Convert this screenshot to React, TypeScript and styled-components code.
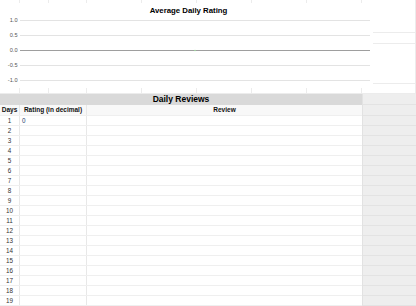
import styled, { createGlobalStyle } from "styled-components";

const GlobalStyle = createGlobalStyle`
  body {
    margin: 0;
    background: #ffffff;
    font-family: "Liberation Sans", Arial, sans-serif;
  }
`;

const SHEET_COLUMNS = [20, 29, 38, 55, 55, 55, 55, 55];
const SHEET_ROWS = [33, 11, 40, 10];
const Y_TICKS = [1.0, 0.5, 0.0, -0.5, -1.0];
const DAYS = Array.from({ length: 19 }, (_, i) => i + 1);

function App(): JSX.Element {
  return (
    <>
      <GlobalStyle />
      <Page>
        <ChartZone>
          <SheetGrid>
            {SHEET_ROWS.map((_, r) =>
              [...SHEET_COLUMNS, 0].map((_, c) => <SheetCell key={`${r}-${c}`} />)
            )}
          </SheetGrid>
          <ChartCard>
            <ChartTitle>Average Daily Rating</ChartTitle>
            <svg width="373" height="71" viewBox="0 0 373 71">
              {Y_TICKS.map((t, i) => {
                const y = 3 + i * 15;
                return (
                  <g key={t}>
                    <line
                      x1="20"
                      x2="370"
                      y1={y + 0.5}
                      y2={y + 0.5}
                      stroke={t === 0 ? "#9e9e9e" : "#e3e3e3"}
                      strokeWidth="1"
                    />
                    <text
                      x="17.5"
                      y={y + 0.5}
                      fontSize="5.6"
                      fill="#555"
                      textAnchor="end"
                      dominantBaseline="middle"
                      fontFamily="Liberation Sans, Arial, sans-serif"
                    >
                      {t.toFixed(1)}
                    </text>
                  </g>
                );
              })}
              <circle cx="195" cy="33.5" r="0.8" fill="#9fdc9f" />
            </svg>
          </ChartCard>
        </ChartZone>
        <TableZone>
          <Table>
            <Band>Daily Reviews</Band>
            <HeaderRow>
              <HeadCell>Days</HeadCell>
              <HeadCell>Rating (in decimal)</HeadCell>
              <HeadCell>Review</HeadCell>
            </HeaderRow>
            {DAYS.map((d) => (
              <Row key={d}>
                <DayCell>{d}</DayCell>
                <RatingCell>{d === 1 ? "0" : ""}</RatingCell>
                <ReviewCell />
              </Row>
            ))}
          </Table>
          <SideColumn>
            <SideCell $h={11} />
            <SideCell $h={11} />
            {DAYS.map((d) => (
              <SideCell key={d} $h={10} />
            ))}
          </SideColumn>
        </TableZone>
      </Page>
    </>
  );
}

export default App;

const Page = styled.div`
  width: 416px;
  height: 306px;
  overflow: hidden;
  display: flex;
  flex-direction: column;
`;

const ChartZone = styled.div`
  position: relative;
  height: 94px;
  flex-shrink: 0;
`;

const SheetGrid = styled.div`
  display: grid;
  grid-template-columns: ${SHEET_COLUMNS.map((w) => `${w}px`).join(" ")} 1fr;
  grid-template-rows: ${SHEET_ROWS.map((h) => `${h}px`).join(" ")};
  height: 94px;
`;

const SheetCell = styled.div`
  box-sizing: border-box;
  border-right: 1px solid #ececec;
  border-bottom: 1px solid #ececec;
`;

const ChartCard = styled.div`
  position: absolute;
  left: 0;
  top: 3px;
  width: 373px;
  height: 85px;
  background: #ffffff;
  display: flex;
  flex-direction: column;

  svg {
    display: block;
  }
`;

const ChartTitle = styled.div`
  margin-top: 2px;
  height: 12px;
  line-height: 12px;
  text-align: center;
  font-size: 7.8px;
  font-weight: 700;
  color: #000;
  padding-left: 4px;
`;

const TableZone = styled.div`
  display: flex;
  flex: 1;
`;

const Table = styled.div`
  width: 362px;
  display: flex;
  flex-direction: column;
`;

const Band = styled.div`
  height: 11px;
  line-height: 11px;
  background: #d9d9d9;
  text-align: center;
  font-size: 8.5px;
  font-weight: 700;
  color: #000;
`;

const rowGrid = `
  display: grid;
  grid-template-columns: 20px 67px 1fr;
  box-sizing: border-box;
  border-bottom: 1px solid #efefef;
`;

const HeaderRow = styled.div`
  ${rowGrid}
  height: 11px;
  background: #f8f8f8;
`;

const HeadCell = styled.div`
  box-sizing: border-box;
  border-right: 1px solid #e8e8e8;
  font-size: 6.5px;
  font-weight: 700;
  line-height: 10px;
  text-align: center;
  color: #111;
  white-space: nowrap;

  &:last-child {
    border-right: none;
  }
`;

const Row = styled.div`
  ${rowGrid}
  height: 10px;
`;

const DayCell = styled.div`
  box-sizing: border-box;
  border-right: 1px solid #e8e8e8;
  font-size: 6.3px;
  line-height: 9px;
  text-align: center;
  color: #333;
`;

const RatingCell = styled.div`
  box-sizing: border-box;
  border-right: 1px solid #e8e8e8;
  font-size: 6.3px;
  line-height: 9px;
  padding-left: 2px;
  color: #23406e;
`;

const ReviewCell = styled.div``;

const SideColumn = styled.div`
  flex: 1;
  background: #eeeeee;
  border-left: 1px solid #e2e2e2;
  display: flex;
  flex-direction: column;
`;

const SideCell = styled.div<{ $h: number }>`
  box-sizing: border-box;
  height: ${(p) => p.$h}px;
  border-bottom: 1px solid #e3e3e3;
  flex-shrink: 0;
`;
